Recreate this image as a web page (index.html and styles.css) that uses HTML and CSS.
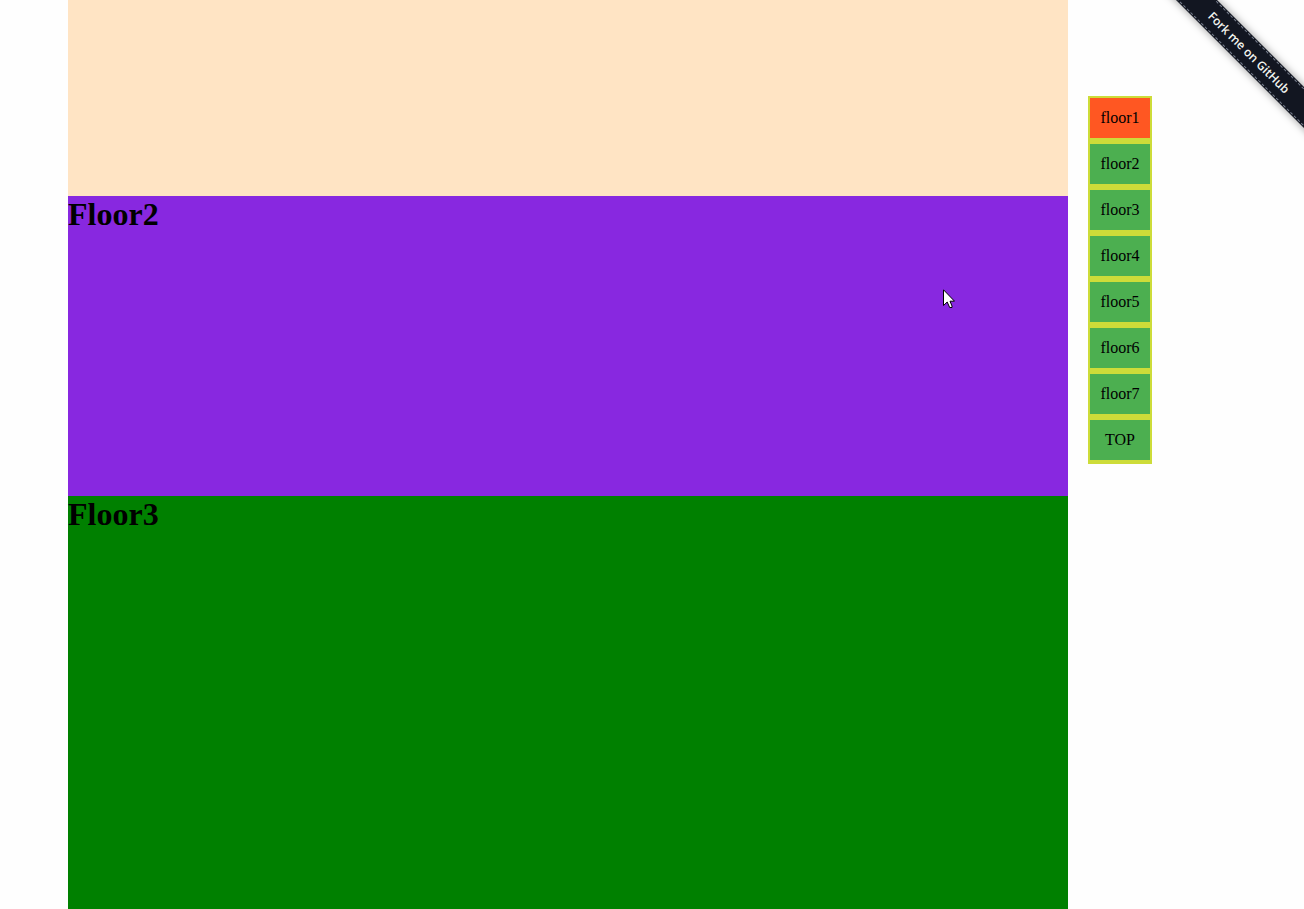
FILE: index.html
```html
<!DOCTYPE html>
<html lang="en">
<head>
<meta charset="utf-8">
<title>Floors</title>
<link rel="stylesheet" href="styles.css">
</head>
<body>
<div class="page">
  <main class="floors">
    <section class="floor floor-one" id="floor1" aria-label="First floor"></section>
    <section class="floor floor-two" id="floor2"><h1>Floor2</h1></section>
    <section class="floor floor-three" id="floor3"><h1>Floor3</h1></section>
  </main>
  <nav class="elevator">
    <a class="active" href="#floor1">floor1</a>
    <a href="#floor2">floor2</a>
    <a href="#floor3">floor3</a>
    <a href="#floor4">floor4</a>
    <a href="#floor5">floor5</a>
    <a href="#floor6">floor6</a>
    <a href="#floor7">floor7</a>
    <a href="#top">TOP</a>
  </nav>
</div>
<div class="ribbon-corner"><a class="ribbon" href="#github"><span>Fork me on GitHub</span></a></div>
<svg class="pointer" width="12" height="20" viewBox="0 0 12 20" aria-hidden="true">
  <path d="M.5 .8V16.5L4.2 13L6.7 18.5H9L9 17L7 12.2H11.5Z" fill="#fff" stroke="#000" stroke-width="1"/>
</svg>
</body>
</html>
```
FILE: styles.css
```css
body {
  margin: 0;
  background: #fefefe;
  color: #000;
  font-family: "Liberation Serif", "Times New Roman", serif;
  font-size: 16px;
}

.page {
  display: flex;
  align-items: flex-start;
  gap: 20px;
  min-height: 100vh;
  padding: 0 152px 0 68px;
}

.floors {
  display: flex;
  flex: 1;
  flex-direction: column;
  align-self: stretch;
}

.floor h1 {
  margin: 0;
  font-size: 32px;
  line-height: 37px;
}

.floor-one {
  min-height: 196px;
  background: #ffe4c4;
}

.floor-two {
  min-height: 300px;
  background: #8828e0;
}

.floor-three {
  flex: 1;
  min-height: 300px;
  background: #008000;
}

.elevator {
  display: flex;
  flex-direction: column;
  margin-top: 96px;
}

.elevator a {
  width: 60px;
  border: 2px solid #cddc39;
  border-bottom-width: 4px;
  background: #4caf50;
  color: #000;
  line-height: 40px;
  text-align: center;
  text-decoration: none;
}

.elevator .active {
  background: #ff5722;
}

.ribbon-corner {
  position: absolute;
  top: 0;
  right: 0;
  width: 150px;
  height: 150px;
  overflow: hidden;
}

.ribbon {
  position: absolute;
  top: 38px;
  left: -25px;
  box-sizing: border-box;
  width: 240px;
  padding: 1px 0;
  background: #121621;
  box-shadow: 0 0 8px rgba(0, 0, 0, 0.4);
  color: #f2f5f0;
  font: 600 12px/25px "Open Sans", sans-serif;
  text-align: center;
  text-decoration: none;
  transform: rotate(45deg);
}

.ribbon span {
  display: block;
  border: 1px dashed #7a8090;
  border-width: 1px 0;
}

.pointer {
  position: absolute;
  top: 289px;
  left: 943px;
}
```
